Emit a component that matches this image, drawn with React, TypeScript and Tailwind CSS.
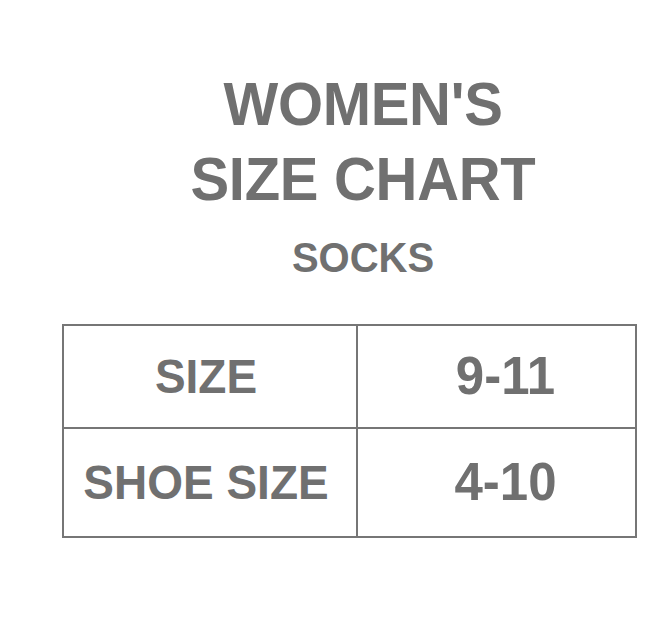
export default function App() {
  const rows = [
    { label: "SIZE", value: "9-11" },
    { label: "SHOE SIZE", value: "4-10" },
  ];

  return (
    <div className="w-[650px] h-[635px] bg-white font-['Liberation_Sans',Arial,sans-serif] font-bold text-[#707070]">
      {/* Heading */}
      <div className="pt-[70px] pl-[76px] text-center">
        <h1 className="text-[58px] leading-[71px] tracking-[-0.3px] scale-y-[1.05]">
          WOMEN'S
          <br />
          SIZE CHART
        </h1>
        <h2 className="mt-[25px] text-[40px] leading-[40px] scale-y-[1.05]">SOCKS</h2>
      </div>

      {/* Table */}
      <div className="mt-[47px] ml-[62px] w-[575px] border-2 border-[#767676]">
        {rows.map((row, i) => (
          <div
            key={row.label}
            className={`grid grid-cols-[294px_1fr] ${i === 0 ? "h-[103px] border-b-2 border-[#767676]" : "h-[107px]"}`}
          >
            <div className="flex items-center justify-center pr-[8px] border-r-2 border-[#767676] text-[46px]">
              <span className="scale-y-[1.05]">{row.label}</span>
            </div>
            <div className="flex items-center justify-center pl-[18px] text-[51px]">
              <span className="scale-y-[1.05]">{row.value}</span>
            </div>
          </div>
        ))}
      </div>
    </div>
  );
}
